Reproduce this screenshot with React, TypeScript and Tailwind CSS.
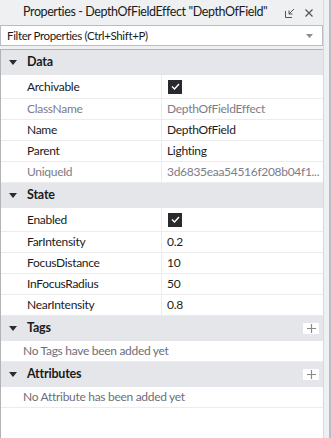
const font = { fontFamily: 'Lato, "Open Sans", sans-serif' };

type Row = { name: string; value: string; check?: boolean; readOnly?: boolean };

const data: Row[] = [
  { name: 'Archivable', value: '', check: true },
  { name: 'ClassName', value: 'DepthOfFieldEffect', readOnly: true },
  { name: 'Name', value: 'DepthOfField' },
  { name: 'Parent', value: 'Lighting' },
  { name: 'UniqueId', value: '3d6835eaa54516f208b04f1...', readOnly: true },
];

const state: Row[] = [
  { name: 'Enabled', value: '', check: true },
  { name: 'FarIntensity', value: '0.2' },
  { name: 'FocusDistance', value: '10' },
  { name: 'InFocusRadius', value: '50' },
  { name: 'NearIntensity', value: '0.8' },
];

function Caret() {
  return (
    <svg width="8" height="5" viewBox="0 0 8 5" className="ml-[8px] mr-[10px]">
      <path d="M0 0 L8 0 L4 5 Z" fill="#2b2b2b" />
    </svg>
  );
}

function Header({ title, plus }: { title: string; plus?: boolean }) {
  return (
    <div className="h-[25px] bg-[#e4e6e9] flex items-center">
      <Caret />
      <span className="font-bold text-[12.5px] tracking-[-0.2px] text-[#1b1b1b]">{title}</span>
      {plus && (
        <div className="ml-auto mr-[4px] w-[16px] h-[11px] bg-white flex items-center justify-center">
          <svg width="9" height="9" viewBox="0 0 9 9">
            <path d="M4.5 0 V9 M0 4.5 H9" stroke="#8a8a8a" strokeWidth="1.2" />
          </svg>
        </div>
      )}
    </div>
  );
}

function PropRow({ row }: { row: Row }) {
  const color = row.readOnly ? 'text-[#7c7c8a]' : 'text-[#1b1b1b]';
  return (
    <div className={`flex border-b border-[#ececec] text-[12px] tracking-[-0.3px] ${row.check ? 'h-[24px]' : 'h-[21px]'}`}>
      <div className={`w-[161px] pl-[26px] flex items-center border-r border-[#ececec] ${color}`}>{row.name}</div>
      <div className={`flex-1 pl-[5px] flex items-center whitespace-nowrap ${color}`}>
        {row.check ? (
          <div className="w-[14px] h-[14px] bg-[#2a2a2e] ml-[1px] flex items-center justify-center">
            <svg width="9" height="7" viewBox="0 0 9 7">
              <path d="M1 3.5 L3.5 6 L8 1" stroke="white" strokeWidth="1.4" fill="none" />
            </svg>
          </div>
        ) : (
          row.value
        )}
      </div>
    </div>
  );
}

export default function App() {
  return (
    <div className="w-[331px] h-[438px] bg-[#eff0f2] flex overflow-hidden" style={font}>
      <div className="w-[323px] flex flex-col">
        <div className="h-[25px] flex items-center pl-[23px] pr-[10px] text-[12.5px] tracking-[-0.4px] text-[#1b1b1b] whitespace-nowrap">
          <span>Properties - DepthOfFieldEffect "DepthOfField"</span>
          <div className="ml-auto flex items-center gap-[10px]">
            <svg width="10" height="10" viewBox="0 0 10 10">
              <path d="M0.5 3 V9.5 H7" stroke="#555" fill="none" />
              <path d="M9 1 L4 6 M4 2.5 V6 H7.5" stroke="#555" fill="none" />
            </svg>
            <svg width="8" height="8" viewBox="0 0 8 8">
              <path d="M0.5 0.5 L7.5 7.5 M7.5 0.5 L0.5 7.5" stroke="#555" strokeWidth="1.2" />
            </svg>
          </div>
        </div>
        <div className="h-[21px] bg-white border border-[#b9bcc2] flex items-center pl-[6px] pr-[9px] text-[11.5px] tracking-[-0.35px] text-[#1b1b1b] whitespace-nowrap">
          <span>Filter Properties (Ctrl+Shift+P)</span>
          <svg width="7" height="4" viewBox="0 0 7 4" className="ml-auto">
            <path d="M0 0 H7 L3.5 4 Z" fill="#8a8d94" />
          </svg>
        </div>
        <div className="mt-[3px] flex-1 bg-white border-l border-t border-[#b0b3b8] flex flex-col">
          <Header title="Data" />
          {data.map((r) => (
            <PropRow key={r.name} row={r} />
          ))}
          <Header title="State" />
          {state.map((r) => (
            <PropRow key={r.name} row={r} />
          ))}
          <Header title="Tags" plus />
          <div className="h-[21px] border-b border-[#ececec] pl-[22px] flex items-center text-[12px] tracking-[-0.3px] text-[#6e6e78]">
            No Tags have been added yet
          </div>
          <Header title="Attributes" plus />
          <div className="h-[21px] border-b border-[#ececec] pl-[22px] flex items-center text-[12px] tracking-[-0.3px] text-[#6e6e78]">
            No Attribute has been added yet
          </div>
        </div>
      </div>
      <div className="w-[1px] bg-[#d6d8dc]" />
      <div className="w-[5px]" />
      <div className="w-[2px] bg-[#b8bcc4]" />
    </div>
  );
}
